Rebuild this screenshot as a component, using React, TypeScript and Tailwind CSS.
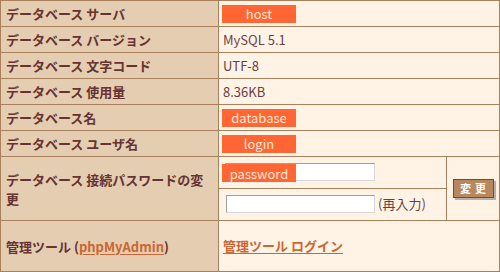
const jp = "font-['Noto_Sans_CJK_JP',sans-serif]";

function Label({ children }: { children: React.ReactNode }) {
  return (
    <div className="bg-[#e4cdb0] pl-[5px] pr-[6px] flex items-center font-bold text-[13px] leading-[19px] text-[#663333]">
      {children}
    </div>
  );
}

function Value({ children }: { children: React.ReactNode }) {
  return (
    <div className="bg-[#fff3e6] pl-1 flex items-center text-[13px] text-[#6b3f3f]">
      {children}
    </div>
  );
}

function Badge({ children }: { children: React.ReactNode }) {
  return (
    <span className="flex h-[18px] w-[74px] items-center justify-center bg-[#ff6633] text-[13px] leading-none text-[#ffe6d6]">
      {children}
    </span>
  );
}

export default function App() {
  return (
    <div className={`${jp} w-[500px] h-[272px] bg-[#a8805c] p-px`}>
      <div className="grid grid-cols-[217px_280px] grid-rows-[25px_25px_25px_25px_25px_25px_63px_50px] gap-px h-full">
        <Label>データベース サーバ</Label>
        <div className="bg-[#fff3e6] pl-[3px] flex items-center">
          <Badge>host</Badge>
        </div>

        <Label>データベース バージョン</Label>
        <Value>MySQL 5.1</Value>

        <Label>データベース 文字コード</Label>
        <Value>UTF-8</Value>

        <Label>データベース 使用量</Label>
        <Value>8.36KB</Value>

        <Label>データベース名</Label>
        <div className="bg-[#fff3e6] pl-[3px] flex items-center">
          <Badge>database</Badge>
        </div>

        <Label>データベース ユーザ名</Label>
        <div className="bg-[#fff3e6] pl-[3px] flex items-center">
          <Badge>login</Badge>
        </div>

        <Label>データベース 接続パスワードの変更</Label>
        <div className="grid grid-cols-[227px_52px] grid-rows-[31px_31px] gap-px">
          <div className="bg-[#fff3e6] pl-[6px] pt-[6px]">
            <div className="relative w-[150px] h-[18px]">
              <input
                type="password"
                className="block w-[150px] h-[18px] bg-white border border-t-[#a0a0a0] border-l-[#a0a0a0] border-r-[#d8d8d8] border-b-[#d8d8d8] outline-none"
              />
              <div className="absolute left-[-3px] top-px">
                <Badge>password</Badge>
              </div>
            </div>
          </div>
          <div className="row-span-2 bg-[#fff3e6] flex items-center justify-center">
            <button className="w-[41px] h-[19px] bg-[#b9875e] border border-[#7b4a28] shadow-[2px_2px_0_#b8b0a8] text-white font-bold text-[11px] leading-none tracking-[4px] pl-[4px]">
              変更
            </button>
          </div>
          <div className="bg-[#fff3e6] pl-[7px] pt-[6px] flex items-start">
            <input
              type="password"
              className="block w-[149px] h-[18px] bg-white border border-t-[#a0a0a0] border-l-[#a0a0a0] border-r-[#d8d8d8] border-b-[#d8d8d8] outline-none"
            />
            <span className="ml-[3px] text-[13px] leading-[18px] text-[#6b3f3f]">(再入力)</span>
          </div>
        </div>

        <Label>
          管理ツール (
          <a href="#" className="text-[#cc6633] underline underline-offset-2">phpMyAdmin</a>)
        </Label>
        <div className="bg-[#fff3e6] pl-1 flex items-center">
          <a href="#" className="text-[13px] font-bold text-[#cc6633] underline underline-offset-2">
            管理ツール ログイン
          </a>
        </div>
      </div>
    </div>
  );
}
